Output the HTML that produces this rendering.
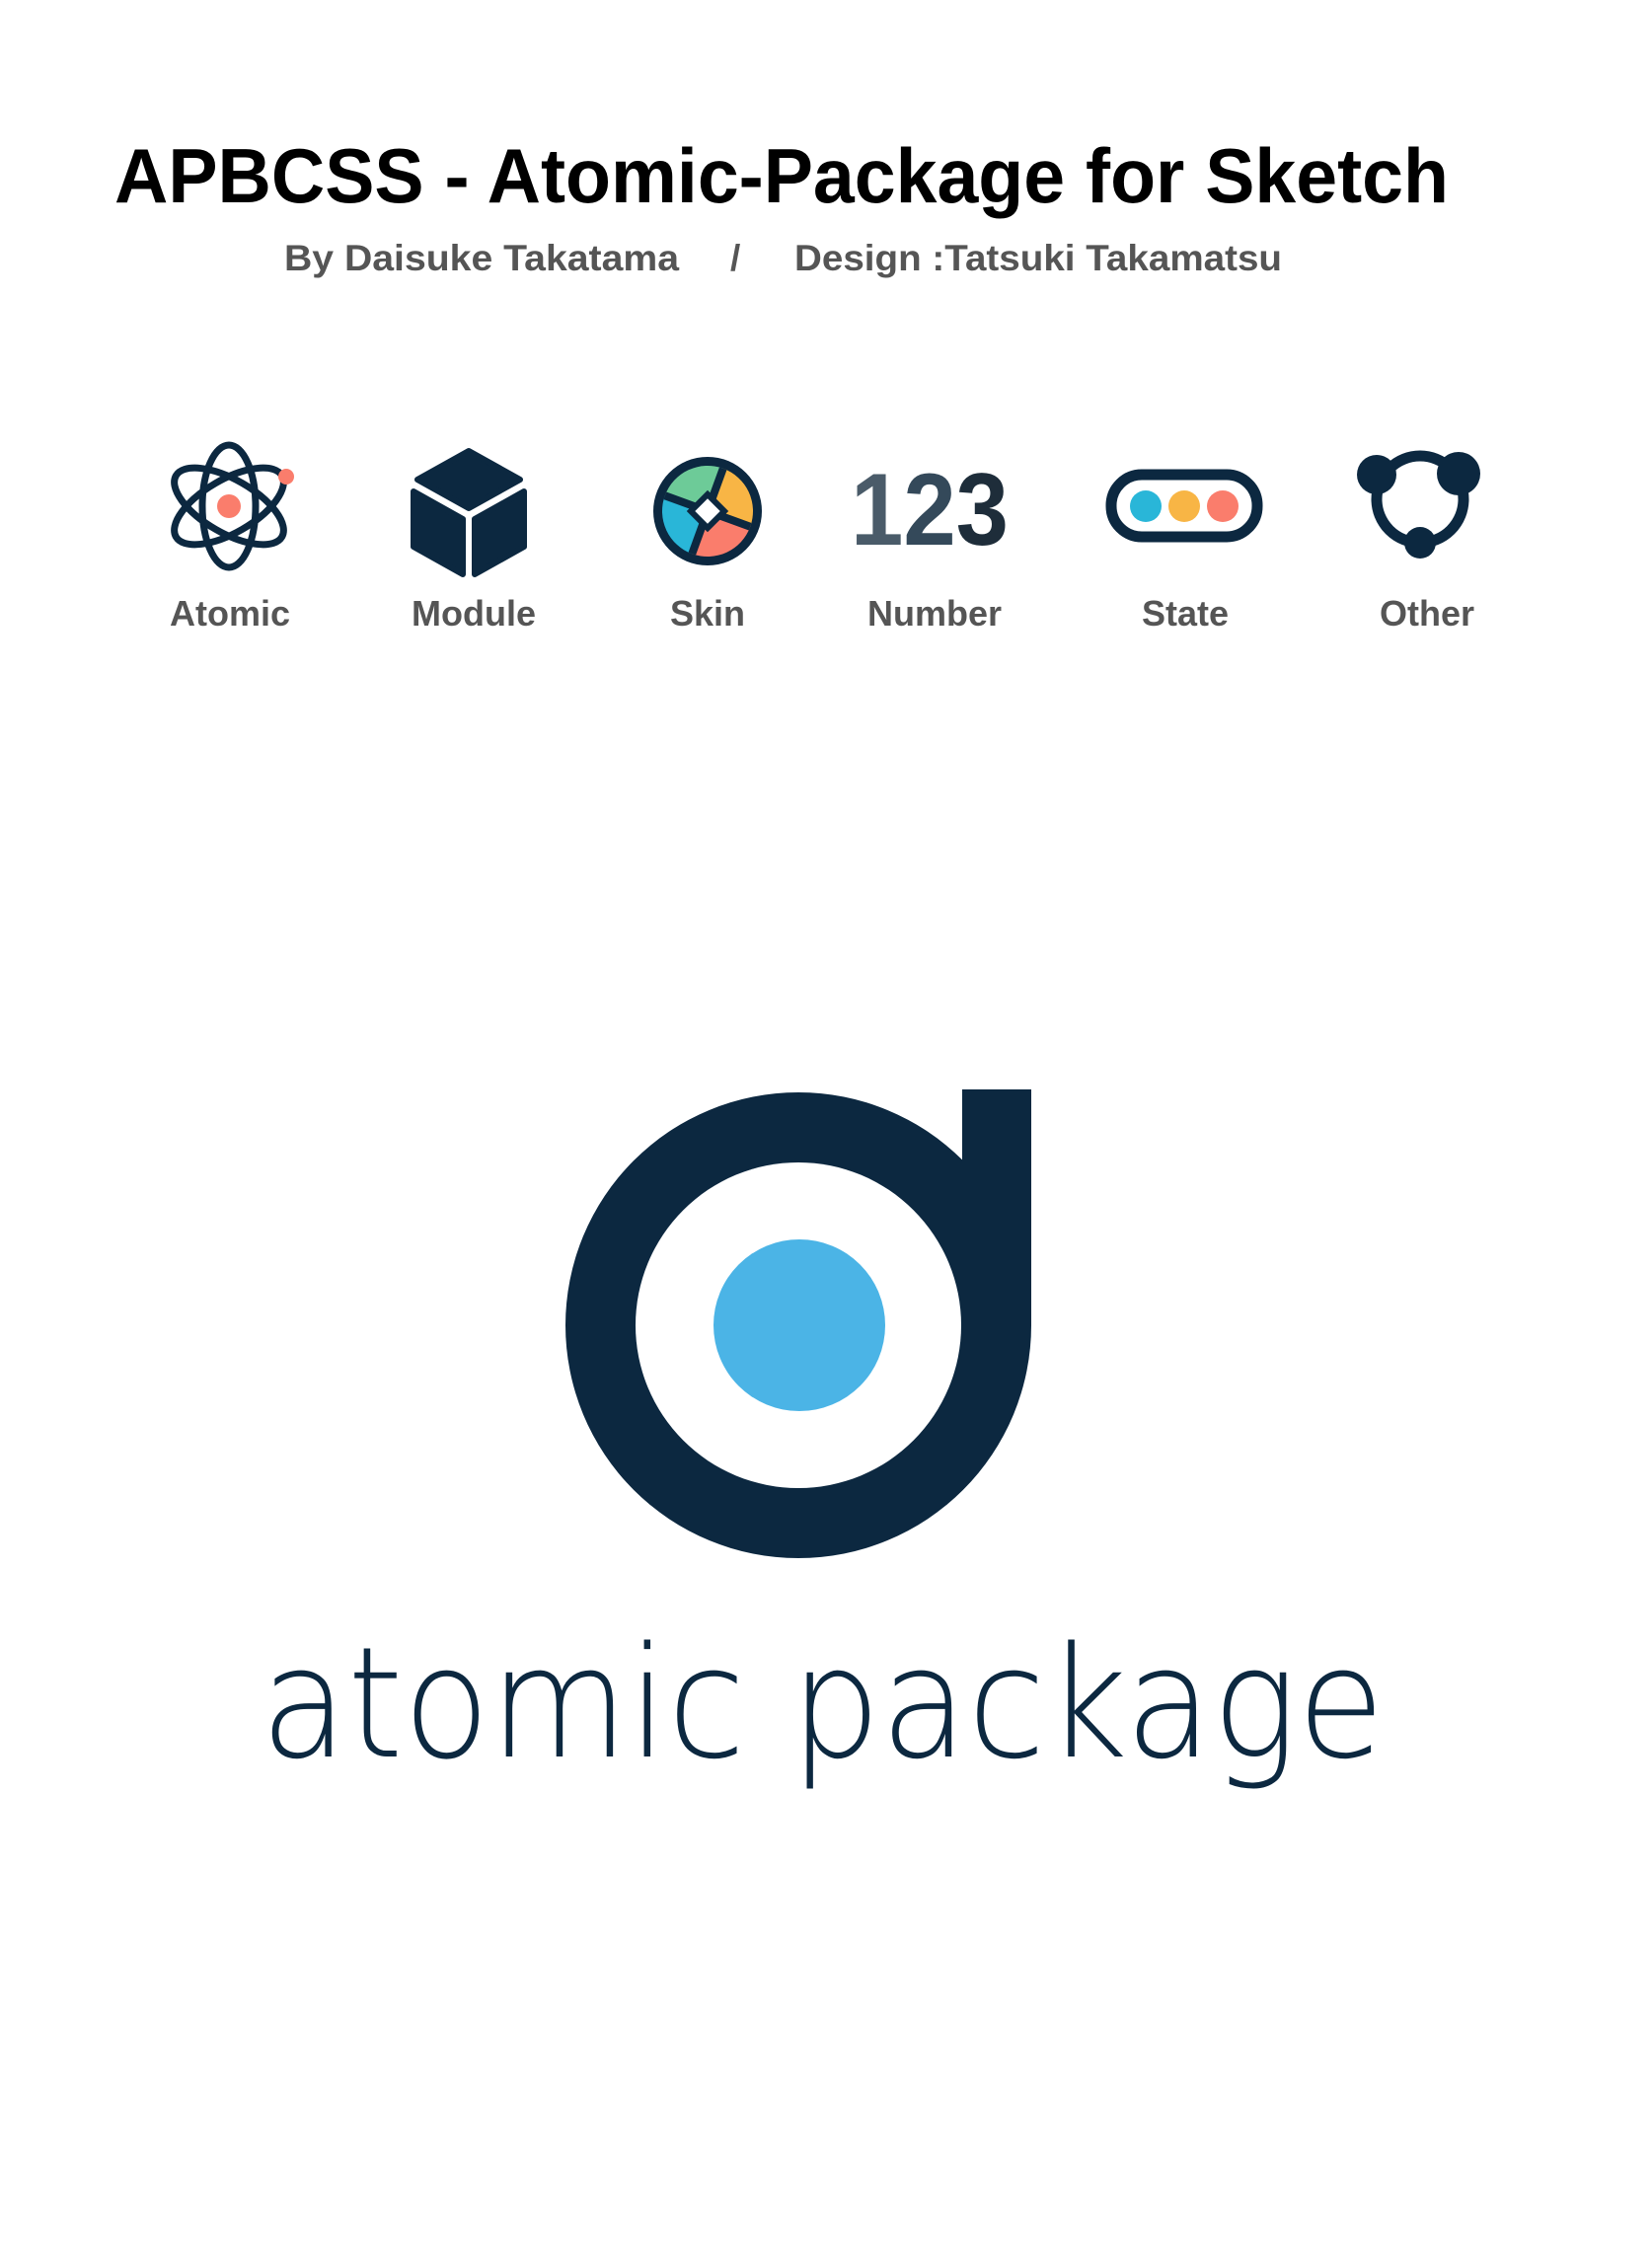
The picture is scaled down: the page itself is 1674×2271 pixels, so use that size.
<!DOCTYPE html>
<html><head><meta charset="utf-8"><style>
html,body{margin:0;padding:0;background:#fff;}
svg{display:block}
</style></head><body>
<svg width="1674" height="2271" viewBox="0 0 1674 2271" xmlns="http://www.w3.org/2000/svg">
<text x="116" y="205" font-family="Liberation Sans, sans-serif" font-weight="bold" font-size="78" fill="#000" textLength="1352" lengthAdjust="spacingAndGlyphs">APBCSS - Atomic-Package for Sketch</text>
<g font-family="Liberation Sans, sans-serif" font-weight="bold" font-size="37" fill="#555">
<text x="288" y="274" textLength="400" lengthAdjust="spacingAndGlyphs">By Daisuke Takatama</text>
<text x="740" y="274">/</text>
<text x="805" y="274" textLength="494" lengthAdjust="spacingAndGlyphs">Design :Tatsuki Takamatsu</text>
</g>
<g transform="translate(0,4)">
<g fill="none" stroke="#0c2840" stroke-width="7">
<ellipse cx="232" cy="509" rx="27" ry="62"/>
<ellipse cx="232" cy="509" rx="27" ry="62" transform="rotate(60 232 509)"/>
<ellipse cx="232" cy="509" rx="27" ry="62" transform="rotate(-60 232 509)"/>
</g>
<circle cx="232" cy="509" r="12" fill="#fa7d6c"/>
<circle cx="290" cy="479" r="8" fill="#fa7d6c"/>
<g fill="#0c2840" stroke="#0c2840" stroke-width="6" stroke-linejoin="round">
<polygon points="475,453 527,482 475,511 423,482"/>
<polygon points="419,494 469,522 469,578 419,550"/>
<polygon points="531,494 481,522 481,578 531,550"/>
</g>
<defs><clipPath id="sc"><circle cx="717" cy="514" r="46"/></clipPath></defs>
<circle cx="717" cy="514" r="55" fill="#0c2840"/>
<g clip-path="url(#sc)" transform="rotate(20 717 514)">
<rect x="667" y="464" width="50" height="50" fill="#6dcb98"/>
<rect x="717" y="464" width="50" height="50" fill="#f8b545"/>
<rect x="667" y="514" width="50" height="50" fill="#29b6d8"/>
<rect x="717" y="514" width="50" height="50" fill="#fa7d6c"/>
<rect x="663" y="510" width="108" height="8" fill="#0c2840"/>
<rect x="713" y="460" width="8" height="108" fill="#0c2840"/>
</g>
<rect x="705" y="502" width="24" height="24" fill="#fff" stroke="#0c2840" stroke-width="6" transform="rotate(45 717 514)"/>
<text x="862" y="548" font-family="Liberation Sans, sans-serif" font-weight="bold" font-size="104" textLength="160" lengthAdjust="spacingAndGlyphs"><tspan fill="#4a5b69">1</tspan><tspan fill="#34495a">2</tspan><tspan fill="#1e2d3a">3</tspan></text>
<rect x="1126" y="477" width="148" height="63" rx="31" fill="#fff" stroke="#0c2840" stroke-width="11"/>
<circle cx="1161" cy="509" r="16" fill="#29b6d8"/>
<circle cx="1200" cy="509" r="16" fill="#f8b545"/>
<circle cx="1239" cy="509" r="16" fill="#fa7d6c"/>
<circle cx="1439" cy="502" r="44" fill="none" stroke="#0c2840" stroke-width="11"/>
<circle cx="1395" cy="477" r="20" fill="#0c2840"/>
<circle cx="1478" cy="476" r="22" fill="#0c2840"/>
<circle cx="1439" cy="546" r="16" fill="#0c2840"/>
</g>
<g font-family="Liberation Sans, sans-serif" font-weight="bold" font-size="36" fill="#555" text-anchor="middle">
<text x="233" y="634">Atomic</text>
<text x="480" y="634">Module</text>
<text x="717" y="634">Skin</text>
<text x="947" y="634">Number</text>
<text x="1201" y="634">State</text>
<text x="1446" y="634">Other</text>
</g>
<circle cx="809" cy="1343" r="236" fill="#0c2840"/>
<rect x="975" y="1104" width="70" height="239" fill="#0c2840"/>
<circle cx="809" cy="1343" r="165" fill="#fff"/>
<circle cx="810" cy="1343" r="87" fill="#4bb4e6"/>
<text x="264" y="1780" font-family="DejaVu Sans, Liberation Sans, sans-serif" font-weight="200" font-size="156" fill="#0c2840" textLength="1139" lengthAdjust="spacingAndGlyphs">atomic package</text>
</svg>
</body></html>
